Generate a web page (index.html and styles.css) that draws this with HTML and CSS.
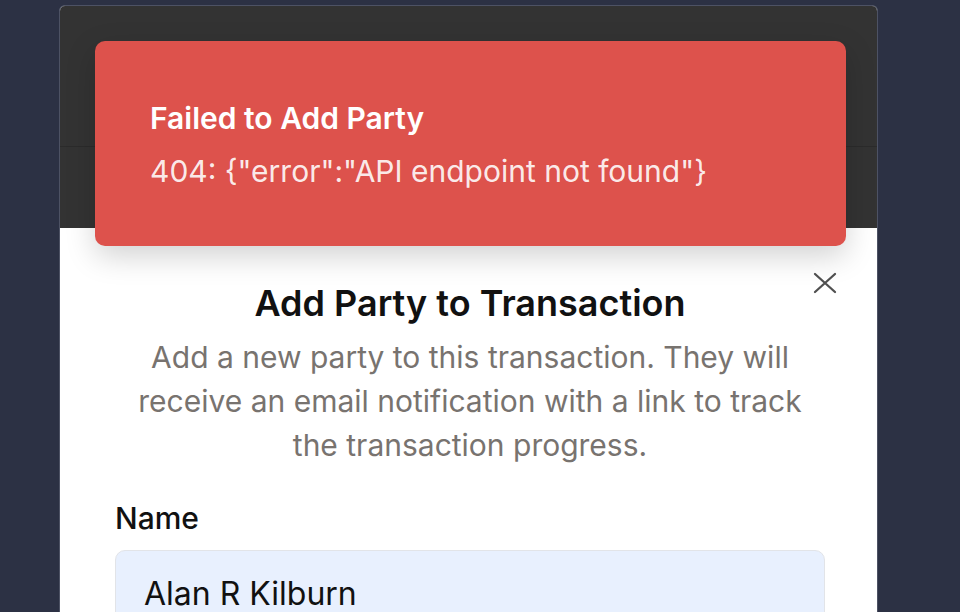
FILE: index.html
```html
<!DOCTYPE html>
<html lang="en">
<head>
<meta charset="utf-8">
<title>Add Party</title>
<link rel="stylesheet" href="styles.css">
</head>
<body>
<div class="stage">
  <div class="panel">
    <div class="backdrop">
      <div class="backdrop-top"></div>
      <div class="backdrop-bottom"></div>
    </div>
    <div class="modal">
      <button class="close" aria-label="Close">
        <svg width="24" height="24" viewBox="0 0 24 24" fill="none" stroke="#505050" stroke-width="2.3" stroke-linecap="round"><path d="M2 3L22 21M22 3L2 21"/></svg>
      </button>
      <h2 class="title">Add Party to Transaction</h2>
      <p class="desc">Add a new party to this transaction. They will receive an email notification with a link to track the transaction progress.</p>
      <label class="label" for="name">Name</label>
      <div class="input" id="name">Alan R Kilburn</div>
    </div>
    <div class="toast">
      <div class="toast-title">Failed to Add Party</div>
      <div class="toast-msg">404: {"error":"API endpoint not found"}</div>
    </div>
  </div>
</div>
</body>
</html>
```
FILE: styles.css
```css
html, body {
  margin: 0;
  height: 100%;
  background: #2c3144;
  overflow: hidden;
  font-family: Inter, "Noto Sans", sans-serif;
}
.stage {
  height: 100%;
  box-sizing: border-box;
  padding: 5px 0 0 59px;
}
.panel {
  position: relative;
  width: 817px;
  height: 100%;
  box-sizing: content-box;
  border: 1px solid #4d5264;
  border-bottom: 0;
  border-radius: 6px 6px 0 0;
  overflow: hidden;
  background: #fff;
}
.backdrop {
  height: 222px;
  background: #333333;
  display: flex;
  flex-direction: column;
}
.backdrop-top {
  height: 140px;
  border-bottom: 1px solid #2b2b2b;
}
.backdrop-bottom {
  flex: 1;
}
.modal {
  position: relative;
  padding: 53px 52px 0 55px;
}
.close {
  position: absolute;
  top: 43px;
  right: 40px;
  border: 0;
  background: none;
  padding: 0;
  width: 24px;
  height: 24px;
}
.close svg { display: block; }
.title {
  margin: 0;
  text-align: center;
  font-size: 36px;
  line-height: 44px;
  font-weight: 600;
  color: #111;
}
.desc {
  margin: 10px 0 0;
  text-align: center;
  font-size: 30px;
  line-height: 44px;
  color: #78736f;
  padding: 0 20px;
}
.label {
  display: block;
  margin-top: 33px;
  font-size: 30px;
  line-height: 36px;
  font-weight: 500;
  color: #111;
}
.input {
  margin-top: 14px;
  height: 90px;
  box-sizing: border-box;
  background: #e8f0fe;
  border: 1px solid #e2e4e8;
  border-radius: 10px;
  padding: 23px 28px;
  font-size: 32px;
  line-height: 40px;
  color: #111;
}
.toast {
  position: absolute;
  top: 35px;
  left: 35px;
  width: 751px;
  height: 205px;
  box-sizing: border-box;
  background: #dd524c;
  border-radius: 10px;
  padding: 57px 55px;
  color: #fff;
  box-shadow: 0 10px 30px rgba(0,0,0,0.18);
}
.toast-title {
  font-size: 30px;
  line-height: 40px;
  font-weight: 600;
}
.toast-msg {
  margin-top: 13px;
  font-size: 30px;
  line-height: 40px;
  font-weight: 400;
  color: rgba(255,255,255,0.9);
}
```
